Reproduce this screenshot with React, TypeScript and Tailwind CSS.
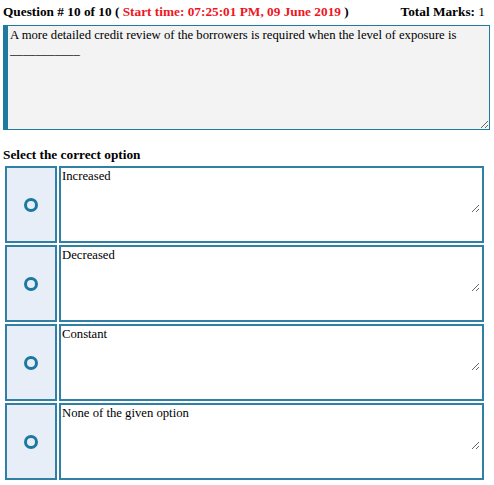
import React from 'react';

const options = ['Increased', 'Decreased', 'Constant', 'None of the given option'];

const serif = { fontFamily: '"Liberation Serif", "Times New Roman", serif' };

export default function App() {
  return (
    <div className="bg-white w-[494px] h-[485px] px-[3px] pt-[4px] text-black" style={serif}>
      <div className="flex justify-between items-center text-[13.3px] font-bold leading-[16px] pr-[6px]">
        <div>
          Question # 10 of 10 ({' '}
          <span className="text-[#f0141e]">Start time: 07:25:01 PM, 09 June 2019</span> )
        </div>
        <div>
          Total Marks: <span className="font-normal">1</span>
        </div>
      </div>

      <textarea
        readOnly
        className="block mt-[5px] w-[487px] h-[105px] bg-[#f3f3f3] border border-[#1f7a9f] border-l-[5px] px-[2px] py-[2px] text-[12.7px] leading-[15px] outline-none"
        style={serif}
        value="A more detailed credit review of the borrowers is required when the level of exposure is ___________"
      />

      <div className="mt-[17px] text-[13.3px] font-bold leading-[16px]">Select the correct option</div>

      <div className="mt-[3px] ml-[2px] flex flex-col gap-[2px]">
        {options.map((opt) => (
          <div key={opt} className="flex gap-[2px] h-[77px]">
            <div className="w-[52px] bg-[#e7eef8] border-2 border-[#3080a6] flex items-center justify-center">
              <div className="w-[14px] h-[14px] rounded-full border-[3px] border-[#1d78a0]" />
            </div>
            <div className="w-[425px] border-2 border-[#3080a6] bg-white">
              <textarea
                readOnly
                className="block w-[419px] h-[45px] bg-white px-[1px] py-[1px] text-[12.7px] leading-[15px] outline-none border-0"
                style={serif}
                value={opt}
              />
            </div>
          </div>
        ))}
      </div>
    </div>
  );
}
